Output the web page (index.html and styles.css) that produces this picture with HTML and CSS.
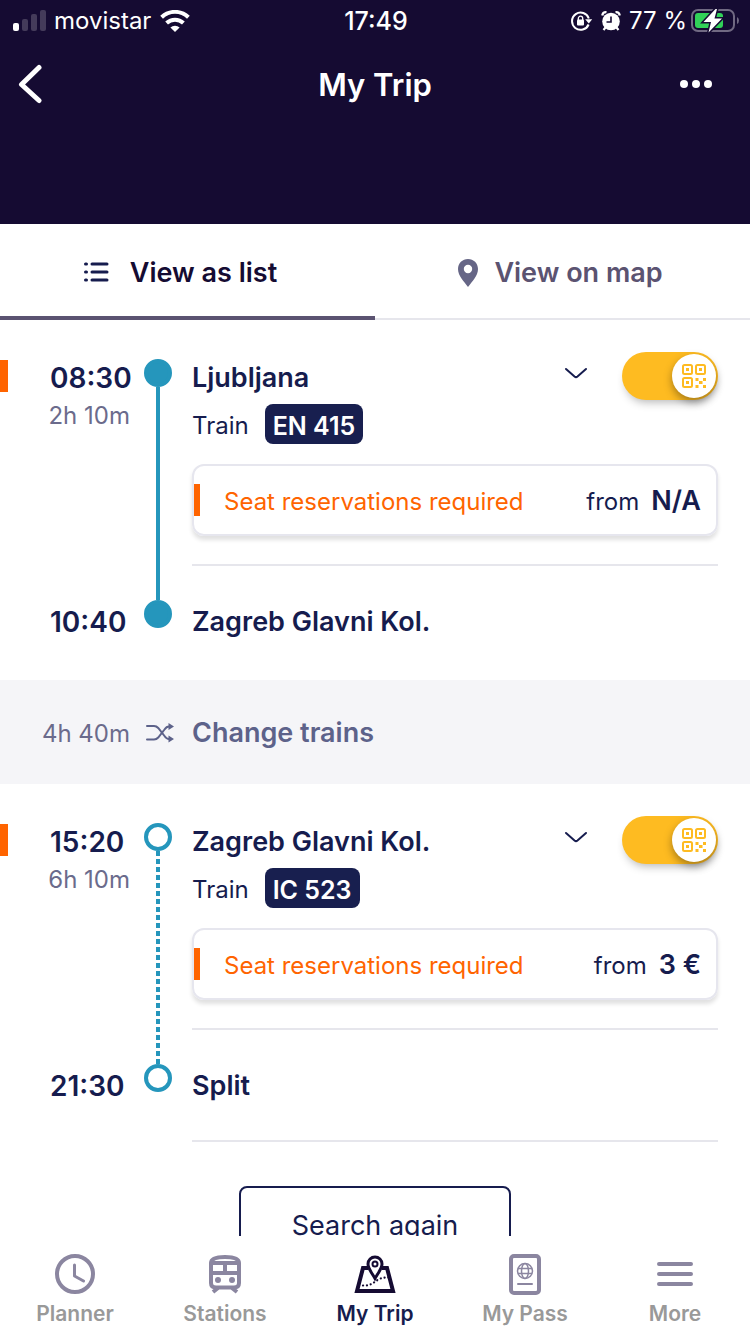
FILE: index.html
```html
<!DOCTYPE html>
<html lang="en">
<head>
<meta charset="utf-8">
<meta name="viewport" content="width=device-width, initial-scale=1">
<title>My Trip</title>
<link rel="stylesheet" href="styles.css">
</head>
<body>
<header class="header">
  <div class="status">
    <div class="status-side">
      <svg class="signal" width="34" height="22" viewBox="0 0 34 22" aria-hidden="true">
        <rect x="0" y="13" width="6" height="8" rx="2" fill="#fff"/>
        <g fill="#443b5a"><rect x="9" y="9" width="6" height="12" rx="2"/><rect x="18" y="4" width="6" height="17" rx="2"/><rect x="27" y="0" width="6" height="21" rx="2"/></g>
      </svg>
      <span class="carrier">movistar</span>
      <svg width="30" height="22" viewBox="0 0 30 22" aria-hidden="true">
        <g fill="none" stroke="#fff" stroke-width="4"><path d="M1.600 7.200a19.500 19.500 0 0 1 26.800 0"/><path d="M6.600 13a12.200 12.200 0 0 1 16.800 0"/></g>
        <path d="M15 22l-4.600-4.400a6.600 6.600 0 0 1 9.200 0z" fill="#fff"/>
      </svg>
    </div>
    <span class="clock">17:49</span>
    <div class="status-side status-end">
      <svg width="22" height="20" viewBox="0 0 22 20" aria-hidden="true">
        <path d="M17.600 13.500a8.600 8.600 0 1 1 .2-6" fill="none" stroke="#fff" stroke-width="2"/>
        <path d="M14.200 8.200h7l-3.400 4.400z" fill="#fff"/>
        <rect x="6" y="8.600" width="7" height="6" rx="1" fill="#fff"/>
        <path d="M7.300 9V7.400a2.200 2.200 0 0 1 4.400 0V9" fill="none" stroke="#fff" stroke-width="1.300"/>
      </svg>
      <svg class="alarm" width="20" height="20" viewBox="0 0 20 20" aria-hidden="true">
        <circle cx="10" cy="10.500" r="8.800" fill="#fff"/>
        <path d="M1.200 4.500A4 4 0 0 1 5.500 1.200M18.800 4.500A4 4 0 0 0 14.500 1.200M4.500 16.500l-2 2.500M15.500 16.500l2 2.500" fill="none" stroke="#fff" stroke-width="2.200"/>
        <path d="M10 5.500V11H5.500" fill="none" stroke="#150b32" stroke-width="1.600"/>
      </svg>
      <span>77 %</span>
      <svg class="battery" width="48" height="24" viewBox="0 0 48 24" aria-hidden="true">
        <rect x="1" y="1" width="42" height="21" rx="6" fill="none" stroke="#706982" stroke-width="2"/>
        <path d="M46 8v7q2-1 2-3.500T46 8z" fill="#706982"/>
        <rect x="4" y="4" width="28" height="15" rx="3" fill="#31d158"/>
        <path d="M24.500 0L12.500 13h7.500l-2.500 10.500L31 9.500h-7.500L26 0z" fill="#fff" stroke="#150b32" stroke-width="3" paint-order="stroke"/>
      </svg>
    </div>
  </div>
  <div class="titlebar">
    <button class="icon-button" aria-label="Back">
      <svg width="24" height="40" viewBox="0 0 24 40" aria-hidden="true"><path d="M21 3.500L3.500 20.500 21 36.500" fill="none" stroke="#fff" stroke-width="5" stroke-linecap="round" stroke-linejoin="round"/></svg>
    </button>
    <h1 class="title">My Trip</h1>
    <button class="icon-button icon-button-end" aria-label="Trip options">
      <svg width="32" height="8" viewBox="0 0 32 8" aria-hidden="true" fill="#fff"><circle cx="4" cy="4" r="4"/><circle cx="16" cy="4" r="4"/><circle cx="28" cy="4" r="4"/></svg>
    </button>
  </div>
</header>

<div class="tabs" role="tablist">
  <button class="tab tab-list tab-active" role="tab" aria-selected="true">
    <svg width="38" height="24" viewBox="0 0 38 24" aria-hidden="true"><path d="M1.500 3h1M8 3h15M1.500 11h1M8 11h15M1.500 19h1M8 19h15" fill="none" stroke="#161c4e" stroke-width="3" stroke-linecap="round"/></svg>
    View as list
  </button>
  <button class="tab" role="tab" aria-selected="false">
    <svg width="20" height="28" viewBox="0 0 20 28" aria-hidden="true"><path fill-rule="evenodd" d="M10 0C4.400 0 0 4.300 0 10c0 7 6 12.500 10 18 4-5.500 10-11 10-18C20 4.300 15.600 0 10 0zm0 5.800a4.200 4.200 0 1 1 0 8.400 4.200 4.200 0 0 1 0-8.400z" fill="#666686"/></svg>
    View on map
  </button>
</div>

<main class="trip">
  <section class="leg">
    <div class="times departure-times">
      <time class="time">08:30</time>
      <span class="duration">2h 10m</span>
    </div>
    <div class="rail">
      <span class="stop stop-filled"></span><span class="track"></span><span class="stop stop-filled"></span>
    </div>
    <div class="departure">
      <div class="station-row">
        <h2 class="station">Ljubljana</h2>
        <button class="expand" aria-label="Show stops from Ljubljana">
          <svg width="24" height="20" viewBox="0 0 24 20" aria-hidden="true"><path d="M2 3l8.500 7.500q1.500 1.200 3 0L22 3" fill="none" stroke="#161c4e" stroke-width="2" stroke-linecap="round"/></svg>
        </button>
        <label class="toggle">
          <input class="toggle-input" type="checkbox" checked aria-label="Add Ljubljana train to pass">
          <svg class="toggle-icon" width="24" height="24" viewBox="0 0 24 24" aria-hidden="true"><g fill="none" stroke="#febb21" stroke-width="2"><rect x="1" y="1" width="9" height="9" rx="1.500"/><rect x="14" y="1" width="9" height="9" rx="1.500"/><rect x="1" y="14" width="9" height="9" rx="1.500"/></g><path fill="#febb21" d="M4 4h3v3H4zM17 4h3v3h-3zM4 17h3v3H4zM13.500 14h3v3h-3zM21 14h3v3h-3zM17 17h3.500v3H17zM13.500 21h3v3h-3zM21 21h3v3h-3z"/></svg>
        </label>
      </div>
      <div class="train-row"><span class="train">Train</span><span class="badge">EN 415</span></div>
      <div class="reservation">
        <span class="required">Seat reservations required</span>
        <span class="from">from</span><strong class="price">N/A</strong>
      </div>
    </div>
    <time class="time arrival-time">10:40</time>
    <div class="arrival"><h2 class="station">Zagreb Glavni Kol.</h2></div>
  </section>

  <section class="change">
    <span class="duration">4h 40m</span>
    <svg class="shuffle" width="28" height="20" viewBox="0 0 28 20" aria-hidden="true"><g fill="none" stroke="#5d628a" stroke-width="2" stroke-linecap="round"><path d="M1 3h7q2.500 0 4.200 2l6.300 8q2 3 4.500 3h1"/><path d="M1 16.500h7q2.500 0 4.200-2l6.300-8q2-3 4.500-3h1"/></g><path fill="#5d628a" d="M22.500 0l5.500 3.500-5.500 3.500zM22.500 12.500l5.500 3.500-5.500 3.500z"/></svg>
    <h2 class="station change-title">Change trains</h2>
  </section>

  <section class="leg">
    <div class="times departure-times">
      <time class="time">15:20</time>
      <span class="duration">6h 10m</span>
    </div>
    <div class="rail">
      <span class="stop"></span><span class="track track-dotted"></span><span class="stop"></span>
    </div>
    <div class="departure">
      <div class="station-row">
        <h2 class="station">Zagreb Glavni Kol.</h2>
        <button class="expand" aria-label="Show stops from Zagreb Glavni Kol.">
          <svg width="24" height="20" viewBox="0 0 24 20" aria-hidden="true"><path d="M2 3l8.500 7.500q1.500 1.200 3 0L22 3" fill="none" stroke="#161c4e" stroke-width="2" stroke-linecap="round"/></svg>
        </button>
        <label class="toggle">
          <input class="toggle-input" type="checkbox" checked aria-label="Add Zagreb train to pass">
          <svg class="toggle-icon" width="24" height="24" viewBox="0 0 24 24" aria-hidden="true"><g fill="none" stroke="#febb21" stroke-width="2"><rect x="1" y="1" width="9" height="9" rx="1.500"/><rect x="14" y="1" width="9" height="9" rx="1.500"/><rect x="1" y="14" width="9" height="9" rx="1.500"/></g><path fill="#febb21" d="M4 4h3v3H4zM17 4h3v3h-3zM4 17h3v3H4zM13.500 14h3v3h-3zM21 14h3v3h-3zM17 17h3.500v3H17zM13.500 21h3v3h-3zM21 21h3v3h-3z"/></svg>
        </label>
      </div>
      <div class="train-row"><span class="train">Train</span><span class="badge">IC 523</span></div>
      <div class="reservation">
        <span class="required">Seat reservations required</span>
        <span class="from">from</span><strong class="price">3 €</strong>
      </div>
    </div>
    <time class="time arrival-time">21:30</time>
    <div class="arrival arrival-last"><h2 class="station">Split</h2></div>
  </section>

  <div class="actions"><button class="search">Search again</button></div>
</main>

<nav class="nav">
  <a class="nav-item" href="#planner">
    <svg width="40" height="40" viewBox="0 0 40 40" aria-hidden="true"><g fill="none" stroke="#8b86a0" stroke-linecap="round" stroke-linejoin="round"><circle cx="20" cy="20" r="18" stroke-width="4"/><path d="M19.500 11v11l9 5" stroke-width="3"/></g></svg>
    Planner
  </a>
  <a class="nav-item" href="#stations">
    <svg width="40" height="40" viewBox="0 0 40 40" aria-hidden="true"><g fill="none" stroke="#8b86a0" stroke-width="4"><path d="M6 9v20q0 4.500 5 4.500h18q5 0 5-4.500V9q0-6-14-6T6 9z"/><path d="M6 9h28M6 19h28M20 9v10"/><path d="M13 34l-5 4M27 34l5 4"/></g><circle cx="13" cy="26" r="3" fill="#8b86a0"/><circle cx="27" cy="26" r="3" fill="#8b86a0"/></svg>
    Stations
  </a>
  <a class="nav-item nav-current" href="#trip" aria-current="page">
    <svg width="42" height="40" viewBox="0 0 42 40" aria-hidden="true"><path d="M14 14H9L3 37h36l-6-23h-5" fill="none" stroke="#150b32" stroke-width="4"/><path d="M21 24.500C18.500 20 14 14.500 14 10a7 7 0 0 1 14 0c0 4.500-4.500 10-7 14.500z" fill="#fff" stroke="#150b32" stroke-width="3"/><circle cx="21" cy="10" r="2.500" fill="none" stroke="#150b32" stroke-width="2"/><path d="M9 31.500c12 1 12-9 26-8" fill="none" stroke="#150b32" stroke-width="2.200" stroke-linecap="round" stroke-dasharray="0.100 3.800"/></svg>
    My Trip
  </a>
  <a class="nav-item" href="#pass">
    <svg width="40" height="42" viewBox="0 0 40 42" aria-hidden="true"><g fill="none" stroke="#8b86a0"><rect x="6" y="2" width="28" height="37" rx="3" stroke-width="4"/><g stroke-width="1.500"><circle cx="20" cy="17" r="7.500"/><ellipse cx="20" cy="17" rx="3.500" ry="7.500"/><path d="M13 14.500h14M13 19.500h14"/></g><path d="M13 30h14" stroke-width="2" stroke-linecap="round"/></g></svg>
    My Pass
  </a>
  <a class="nav-item" href="#more">
    <svg width="40" height="40" viewBox="0 0 40 40" aria-hidden="true"><path d="M4 10h32M4 20h32M4 30h32" fill="none" stroke="#8b86a0" stroke-width="4" stroke-linecap="round"/></svg>
    More
  </a>
</nav>
</body>
</html>
```

FILE: styles.css
```css
* { box-sizing: border-box; }

body {
  margin: 0;
  height: 100vh;
  display: flex;
  flex-direction: column;
  background: #fff;
  color: #161c4e;
  font-family: Inter, "Liberation Sans", sans-serif;
  font-size: 24px;
  line-height: 32px;
}

h1, h2 { margin: 0; }
svg { display: block; flex: none; }

button {
  padding: 0;
  border: 0;
  background: none;
  color: inherit;
  font: inherit;
  cursor: pointer;
}

.header {
  flex: none;
  padding-bottom: 96px;
  background: #150b32;
  color: #fff;
}

.status {
  display: grid;
  grid-template-columns: 1fr auto 1fr;
  align-items: center;
  height: 40px;
  padding: 2px 11px 0 13px;
}

.status-side { display: flex; align-items: center; }
.status-end { justify-content: flex-end; }
.carrier { margin: 0 9px 0 7px; }
.clock { font-size: 25px; font-weight: 500; }
.alarm { margin: 0 8px; }
.battery { margin-left: 4px; }

.titlebar {
  display: grid;
  grid-template-columns: 1fr auto 1fr;
  align-items: center;
  height: 88px;
  padding: 0 38px 0 18px;
}

.icon-button { justify-self: start; }
.icon-button-end { justify-self: end; }
.title { padding: 2px 0 0 20px; font-size: 31px; line-height: 40px; font-weight: 600; }

.tabs {
  flex: none;
  display: grid;
  grid-template-columns: 1fr 1fr;
  height: 96px;
}

.tab {
  display: flex;
  align-items: center;
  justify-content: center;
  gap: 16px;
  padding: 4px 4px 0 0;
  border-bottom: 2px solid #e6e6ec;
  color: #5b5371;
  font-size: 27px;
  font-weight: 600;
}

.tab-list { gap: 8px; padding-right: 14px; }

.tab-active {
  padding-top: 2px;
  border-bottom: 0;
  color: #150b32;
  background: linear-gradient(#5b5371, #5b5371) bottom / 100% 4px no-repeat;
}

.trip {
  flex: 1;
  min-height: 0;
  overflow-y: auto;
  scrollbar-width: none;
}

.leg {
  display: grid;
  grid-template-columns: 144px 28px 1fr;
  padding: 0 32px 2px 0;
}

.times {
  display: flex;
  flex-direction: column;
  align-self: start;
}

.departure-times {
  margin-top: 40px;
  padding-top: 2px;
  background: linear-gradient(#ff6400, #ff6400) left top / 8px 32px no-repeat;
}

.time {
  padding-left: 50px;
  font-size: 28px;
  font-weight: 600;
}

.duration {
  width: 130px;
  margin-top: 6px;
  color: #6b6b8c;
  text-align: right;
}

.rail {
  grid-row: 1 / 3;
  grid-column: 2;
  display: flex;
  flex-direction: column;
  align-items: center;
  padding: 39px 0 50px;
}

.stop {
  width: 28px;
  height: 28px;
  border: 4px solid #2596bc;
  border-radius: 50%;
}

.stop-filled { background: #2596bc; }
.track { flex: 1; width: 4px; background: #2596bc; }
.track-dotted { background: repeating-linear-gradient(#2596bc 0 5px, transparent 5px 8px); }

.departure {
  margin-left: 20px;
  padding: 32px 0 28px;
  border-bottom: 2px solid #e6e6ec;
}

.station-row { display: flex; align-items: center; height: 48px; }
.station { flex: 1; font-size: 27px; font-weight: 600; }
.station-row .station { padding-top: 4px; }
.expand { margin-right: 34px; }

.toggle { position: relative; width: 96px; height: 48px; }

.toggle-input {
  appearance: none;
  display: flex;
  justify-content: flex-end;
  width: 100%;
  height: 100%;
  margin: 0;
  padding: 2px;
  border-radius: 24px;
  background: #febb21;
  box-shadow: 0 6px 10px -4px rgba(0, 0, 0, 0.3);
}

.toggle-input::before {
  content: "";
  width: 44px;
  height: 44px;
  border-radius: 50%;
  background: #fff;
  box-shadow: 0 4px 8px rgba(0, 0, 0, 0.35);
}

.toggle-input:not(:checked) { justify-content: flex-start; background: #d6d6de; }
.toggle-icon { position: absolute; right: 12px; top: 12px; pointer-events: none; }
.toggle-input:not(:checked) + .toggle-icon { right: 60px; }

.train-row { display: flex; align-items: center; gap: 16px; margin-top: 4px; }
.train { padding-top: 4px; }

.badge {
  padding: 6px 8px 2px;
  border-radius: 8px;
  background: #181f4f;
  color: #fff;
  font-size: 25px;
  font-weight: 600;
}

.reservation {
  display: flex;
  align-items: center;
  height: 72px;
  margin-top: 20px;
  padding-right: 15px;
  border: 2px solid #e6e6ee;
  border-radius: 12px;
  box-shadow: 0 4px 4px rgba(0, 0, 0, 0.12);
}

.required {
  flex: 1;
  padding: 4px 0 0 24px;
  border-left: 6px solid #ff6400;
  color: #ff6400;
  line-height: 28px;
}

.from { padding-top: 4px; }
.price { margin-left: 12px; padding-top: 2px; font-size: 27px; font-weight: 600; }

.arrival-time { grid-column: 1; padding-top: 40px; }

.arrival {
  margin-left: 20px;
  padding: 40px 0 38px;
  border-bottom: 2px solid transparent;
}

.arrival-last { border-bottom-color: #e6e6ec; }

.change {
  display: flex;
  align-items: center;
  height: 104px;
  padding-top: 2px;
  background: #f5f5f8;
}

.change .duration { margin-top: 2px; }
.shuffle { margin: 0 18px 0 16px; }
.change-title { color: #5d628a; }

.actions { display: flex; justify-content: center; padding: 42px 32px 32px; }

.search {
  padding: 22px 51px;
  border: 2px solid #161c4e;
  border-radius: 8px;
  font-size: 27px;
}

.nav {
  flex: none;
  display: grid;
  grid-template-columns: repeat(5, 1fr);
  height: 98px;
  background: #fff;
}

.nav-item {
  display: grid;
  grid-template-rows: 40px 24px;
  justify-items: center;
  align-content: start;
  gap: 8px;
  padding-top: 18px;
  color: #999;
  font-size: 21px;
  line-height: 24px;
  font-weight: 600;
  text-decoration: none;
}

.nav-current { color: #161c4e; }
```
